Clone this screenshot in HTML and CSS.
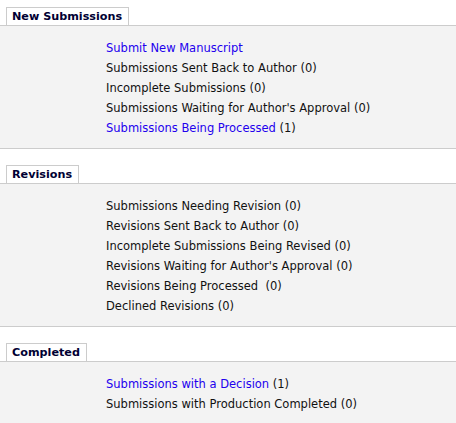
FILE: index.html
```html
<!DOCTYPE html>
<html>
<head>
<meta charset="utf-8">
<link rel="stylesheet" href="styles.css">
</head>
<body>
<div class="section">
  <div class="tab">New Submissions</div>
  <ul class="panel">
    <li><a href="#">Submit New Manuscript</a></li>
    <li>Submissions Sent Back to Author (0)</li>
    <li>Incomplete Submissions (0)</li>
    <li>Submissions Waiting for Author's Approval (0)</li>
    <li><a href="#">Submissions Being Processed</a> (1)</li>
  </ul>
</div>
<div class="section">
  <div class="tab">Revisions</div>
  <ul class="panel">
    <li>Submissions Needing Revision (0)</li>
    <li>Revisions Sent Back to Author (0)</li>
    <li>Incomplete Submissions Being Revised (0)</li>
    <li>Revisions Waiting for Author's Approval (0)</li>
    <li>Revisions Being Processed&nbsp; (0)</li>
    <li>Declined Revisions (0)</li>
  </ul>
</div>
<div class="section">
  <div class="tab">Completed</div>
  <ul class="panel last">
    <li><a href="#">Submissions with a Decision</a> (1)</li>
    <li>Submissions with Production Completed (0)</li>
  </ul>
</div>
</body>
</html>
```
FILE: styles.css
```css
html, body {
  margin: 0;
  padding: 0;
  background: #fff;
}
body {
  padding-top: 7px;
  font-family: "DejaVu Sans", Verdana, sans-serif;
  font-size: 11px;
  color: #111;
}
.section {
  margin-bottom: 16px;
}
.tab {
  display: inline-block;
  margin-left: 6px;
  padding: 0 6px 0 5px;
  height: 17px;
  line-height: 18px;
  border: 1px solid #ccc;
  border-bottom: none;
  font-size: 11.2px;
  font-weight: bold;
  color: #000033;
  background: #fff;
  vertical-align: bottom;
}
.panel {
  list-style: none;
  margin: 0;
  padding: 12px 0 10px 106px;
  background: #f3f3f3;
  border-top: 1px solid #ccc;
  border-bottom: 1px solid #ccc;
  font-size: 11.5px;
}
.panel.last {
  border-bottom: none;
  padding-bottom: 9px;
}
.panel li {
  line-height: 20px;
  height: 20px;
}
.panel a {
  color: #2200ee;
  text-decoration: none;
}
```
